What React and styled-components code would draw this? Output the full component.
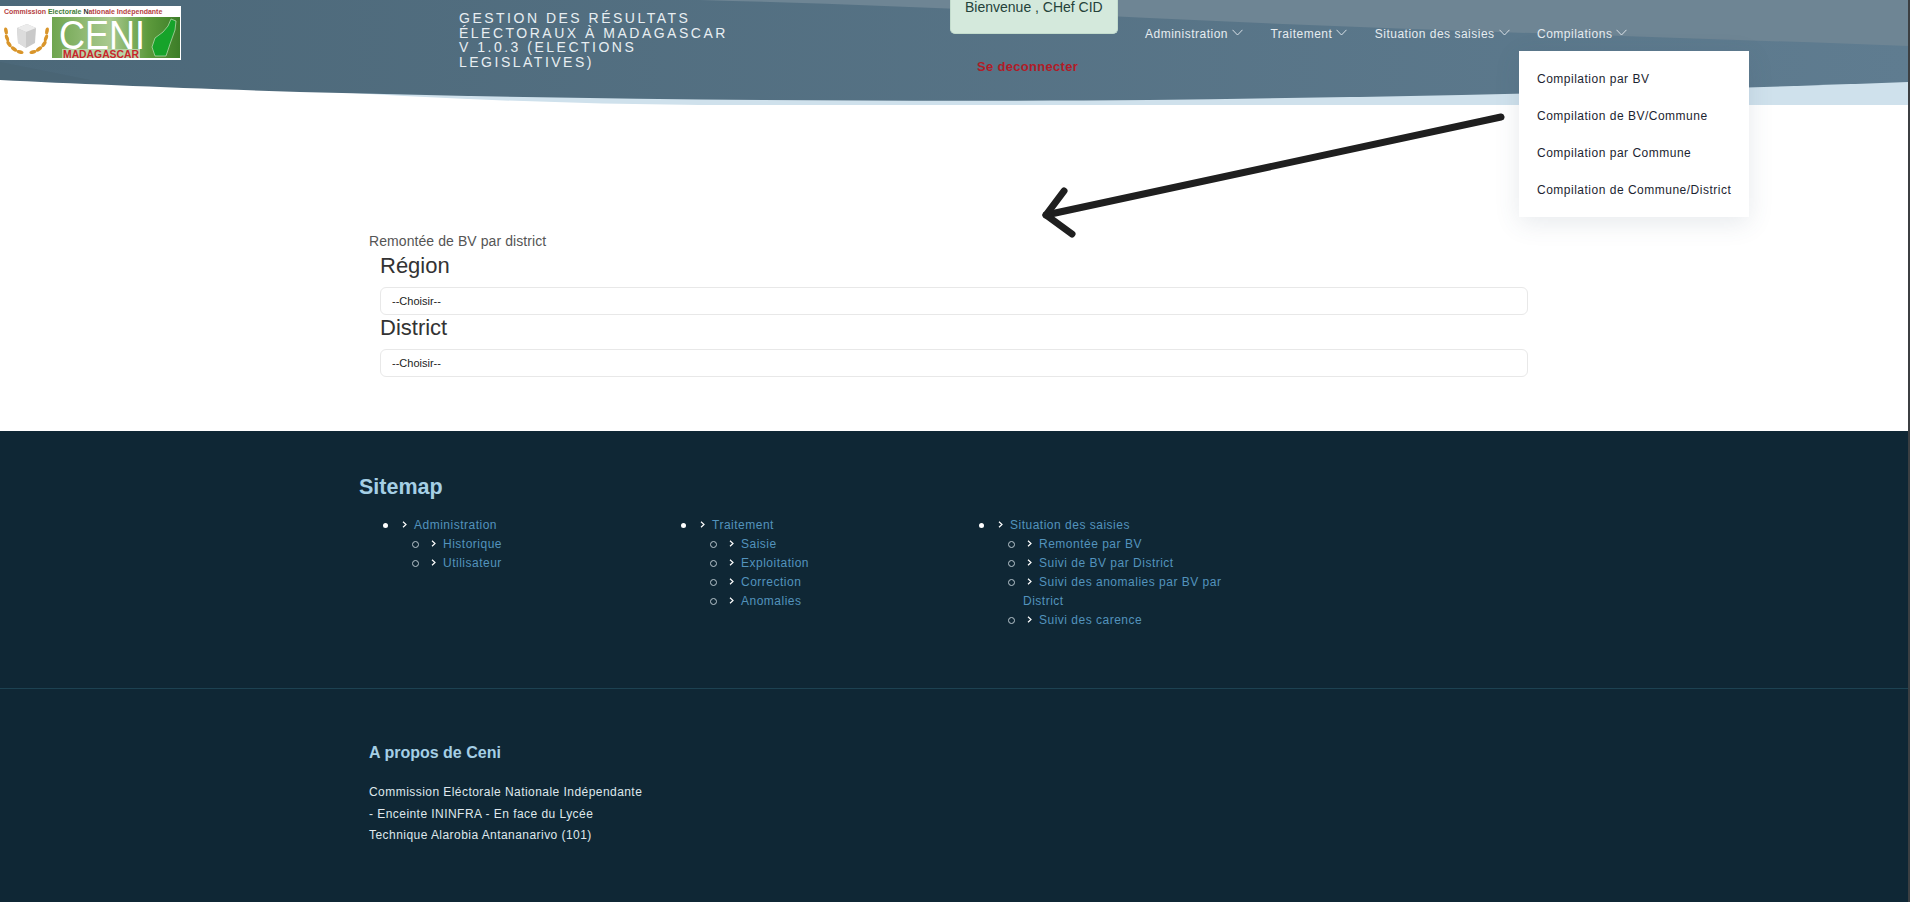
import React from "react";
import styled, { createGlobalStyle } from "styled-components";

const GlobalStyle = createGlobalStyle`
  html, body {
    margin: 0;
    padding: 0;
    background: #fff;
    font-family: "Liberation Sans", Arial, sans-serif;
    font-size: 14px;
    color: #444;
  }
  * { box-sizing: border-box; }
`;

const Page = styled.div`
  position: relative;
  width: 100%;
  height: 902px;
  overflow: hidden;
  border-right: 2px solid #3c3f42;
`;

const Header = styled.header`
  position: relative;
  display: flex;
  align-items: flex-start;
  height: 105px;
`;

const HeaderWave = styled.svg`
  position: absolute;
  inset: 0;
  width: 100%;
  height: 105px;
`;

const LogoBox = styled.div`
  position: relative;
  width: 181px;
  height: 54px;
  margin-top: 6px;
  flex: none;
`;

const Title = styled.h1`
  position: relative;
  width: 278px;
  margin: 11px 0 0 278px;
  flex: none;
  font-size: 14px;
  line-height: 14.6px;
  font-weight: 400;
  letter-spacing: 2.5px;
  color: #e8eef2;
`;

const UserBox = styled.div`
  position: relative;
  width: 195px;
  margin-left: 213px;
  flex: none;
`;

const Welcome = styled.div`
  width: 168px;
  height: 34px;
  padding: 0 0 0 14px;
  background: #d4e9dc;
  border: 1px solid #c3dccd;
  border-top: 0;
  border-radius: 0 0 5px 5px;
  font-size: 14px;
  line-height: 14px;
  color: #24423a;
`;

const Logout = styled.a`
  display: block;
  margin: 25px 0 0 27px;
  font-size: 13px;
  line-height: 16px;
  font-weight: 700;
  letter-spacing: 0.3px;
  color: #b01c27;
`;

const Nav = styled.nav`
  position: relative;
  display: flex;
  height: 51px;
  flex: none;
`;

const NavItem = styled.div`
  position: relative;
  display: flex;
  align-items: center;
  gap: 4px;
  padding: 16px 14px 0 0;
  height: 51px;
  margin-right: 13.4px;
  font-size: 12px;
  line-height: 36px;
  letter-spacing: 0.5px;
  white-space: nowrap;
  color: #e6ecf0;
  align-self: flex-start;
`;

const NavChevron = styled.svg`
  width: 11px;
  height: 7px;
  margin-top: -3px;
  flex: none;
`;

const Dropdown = styled.ul`
  position: absolute;
  top: 51px;
  left: -18px;
  width: 230px;
  margin: 0;
  padding: 9.5px 0 8.5px;
  list-style: none;
  background: #fff;
  box-shadow: 0 6px 24px rgba(60, 80, 110, 0.12);
  z-index: 3;
`;

const DropdownItem = styled.li`
  height: 37px;
  padding-left: 18px;
  font-size: 12px;
  line-height: 37px;
  letter-spacing: 0.5px;
  color: #1c2430;
`;

const Arrow = styled.svg`
  position: absolute;
  left: 1030px;
  top: 105px;
  width: 490px;
  height: 140px;
  z-index: 2;
`;

const Main = styled.main`
  height: 326px;
  padding: 126px 0 0 369px;
`;

const PageTitle = styled.div`
  font-size: 14px;
  line-height: 20px;
  margin-bottom: 2px;
  letter-spacing: 0.08px;
  color: #555;
`;

const Form = styled.form`
  width: 1148px;
  margin-left: 11px;
`;

const FieldLabel = styled.label`
  display: block;
  font-size: 22px;
  line-height: 26px;
  margin-bottom: 8px;
  color: #333;
`;

const Select = styled.select`
  display: block;
  width: 100%;
  height: 28px;
  padding: 0 0 0 11px;
  background: #fff;
  border: 1px solid #e8e8e8;
  border-radius: 6px;
  appearance: none;
  font-family: inherit;
  font-size: 11px;
  color: #222;
`;

const Footer = styled.footer`
  height: 471px;
  background: #0f2735;
`;

const Sitemap = styled.section`
  height: 258px;
  padding: 43px 0 0 359px;
  border-bottom: 1px solid #1d4252;
`;

const SitemapTitle = styled.h2`
  margin: 0 0 16px;
  font-size: 21.5px;
  line-height: 26px;
  font-weight: 700;
  color: #a5cfe5;
`;

const Columns = styled.div`
  display: grid;
  grid-template-columns: repeat(3, 298px);
  margin-left: 10px;
`;

const TopList = styled.ul`
  width: 268px;
  margin: 0;
  padding: 0 0 0 29px;
  list-style: none;
`;

const SubList = styled.ul`
  margin: 0;
  padding: 0 0 0 29px;
  list-style: none;
`;

const Item = styled.li`
  position: relative;
  font-size: 12px;
  line-height: 19px;
  letter-spacing: 0.5px;

  &::before {
    content: "";
    position: absolute;
    top: ${(p) => (p.$sub ? "5.5px" : "7px")};
    left: ${(p) => (p.$sub ? "-15.5px" : "-15.5px")};
    width: 5px;
    height: 5px;
    border-radius: 50%;
    background: ${(p) => (p.$sub ? "transparent" : "#fff")};
    border: ${(p) => (p.$sub ? "1.5px solid #b9c6ce" : "0")};
  }
`;

const ItemLink = styled.a`
  color: #5393bd;
`;

const ItemChevron = styled.svg`
  width: 5px;
  height: 7px;
  margin: 0 7px 3px 4px;
  vertical-align: middle;
`;

const About = styled.section`
  padding: 53px 0 0 369px;
`;

const AboutTitle = styled.h3`
  margin: 0 0 18px;
  font-size: 16px;
  line-height: 22px;
  font-weight: 700;
  color: #a5cfe5;
`;

const AboutText = styled.p`
  width: 300px;
  margin: 0;
  font-size: 12px;
  line-height: 21.6px;
  letter-spacing: 0.45px;
  color: #dfe7ec;
`;

const chevronDown = (
  <NavChevron viewBox="0 0 11 7" fill="none" stroke="#e6ecf0" strokeWidth="0.9">
    <path d="M0.5 0.8 L5.5 6 L10.5 0.8" />
  </NavChevron>
);

const chevronRight = (
  <ItemChevron viewBox="0 0 5 7" fill="none" stroke="#fff" strokeWidth="1.2">
    <path d="M1 0.8 L4 3.5 L1 6.2" />
  </ItemChevron>
);

const navItems = ["Administration", "Traitement", "Situation des saisies"];

const compilations = [
  "Compilation par BV",
  "Compilation de BV/Commune",
  "Compilation par Commune",
  "Compilation de Commune/District",
];

const sitemap = [
  { title: "Administration", items: ["Historique", "Utilisateur"] },
  { title: "Traitement", items: ["Saisie", "Exploitation", "Correction", "Anomalies"] },
  {
    title: "Situation des saisies",
    items: [
      "Remontée par BV",
      "Suivi de BV par District",
      "Suivi des anomalies par BV par District",
      "Suivi des carence",
    ],
  },
];

const leaves = [
  [6, 25, -10], [7, 32, -20], [9, 38, -35], [14, 43, -55], [20, 46, -75],
  [47, 25, 10], [46, 32, 20], [44, 38, 35], [39, 43, 55], [33, 46, 75],
];

const Logo = () => (
  <svg width="181" height="54" viewBox="0 0 181 54">
    <defs>
      <linearGradient id="panel" x1="0" x2="1" y1="0" y2="0">
        <stop offset="0" stopColor="#6fa54f" />
        <stop offset="0.45" stopColor="#a9c98f" />
        <stop offset="0.75" stopColor="#5d9a3c" />
        <stop offset="1" stopColor="#3c7d28" />
      </linearGradient>
    </defs>
    <rect width="181" height="54" fill="#fff" />
    <text x="4" y="8" fontFamily="Liberation Sans" fontSize="7" fontWeight="700" fill="#b5413f">
      Commission <tspan fill="#3f7d37">Electorale</tspan> <tspan fill="#333">N</tspan>ationale <tspan fill="#b5413f">Indépendante</tspan>
    </text>
    <rect x="52" y="11" width="128" height="41" fill="url(#panel)" />
    <path d="M17 22 L27 18 L36 22 L35 37 L26 42 L18 37 Z" fill="#c9c9c9" />
    <path d="M17 22 L26 26 L36 22 L27 18 Z" fill="#ececec" />
    <path d="M26 26 L26 42 L18 37 L17 22 Z" fill="#dcdcdc" />
    <g fill="#d9952a">
      {leaves.map(([x, y, r]) => (
        <ellipse key={x + "-" + y} cx={x} cy={y} rx="1.8" ry="3.6" transform={`rotate(${r} ${x} ${y})`} />
      ))}
    </g>
    <text x="59" y="43" fontFamily="Liberation Sans" fontSize="41" fill="#fff" textLength="86" lengthAdjust="spacingAndGlyphs">CENI</text>
    <rect x="62" y="43" width="78" height="9" fill="#b9d3a8" />
    <text x="63" y="51.5" fontFamily="Liberation Sans" fontSize="10" fontWeight="700" fill="#c9252b" textLength="76" lengthAdjust="spacingAndGlyphs">MADAGASCAR</text>
    <path d="M171 13 L176 15 L175 24 L170 38 L166 50 L155 50 L152 41 L155 32 L163 26 L168 20 Z" fill="#16a32a" stroke="#d9ecd0" strokeWidth="0.6" />
  </svg>
);

export default function App() {
  return (
    <Page>
      <GlobalStyle />
      <Header>
        <HeaderWave viewBox="0 0 1910 105" preserveAspectRatio="none">
          <defs>
            <linearGradient id="wave" x1="0" x2="1" y1="0" y2="0">
              <stop offset="0" stopColor="#4c6879" />
              <stop offset="1" stopColor="#5f7c90" />
            </linearGradient>
          </defs>
          <path d="M300 90 L1910 70 L1910 105 L700 105 C560 104 430 98 300 90 Z" fill="#cfe1ec" />
          <path d="M0 0 L1910 0 L1910 82 C1640 92 1400 97 1150 100 C900 102 600 100 300 92 C180 88 80 84 0 80 Z" fill="url(#wave)" />
          <path d="M700 0 L1910 0 L1910 46 C1640 36 1400 30 1150 18 C1000 10 850 4 700 0 Z" fill="#6e8594" />
          <path d="M0 62 C30 68 60 74 90 80 L0 80 Z" fill="#48626f" opacity="0.5" />
        </HeaderWave>
        <LogoBox>
          <Logo />
        </LogoBox>
        <Title>GESTION DES RÉSULTATS ÉLECTORAUX À MADAGASCAR V 1.0.3 (ELECTIONS LEGISLATIVES)</Title>
        <UserBox>
          <Welcome>Bienvenue , CHef CID</Welcome>
          <Logout>Se deconnecter</Logout>
        </UserBox>
        <Nav>
          {navItems.map((label) => (
            <NavItem key={label}>
              {label}
              {chevronDown}
            </NavItem>
          ))}
          <NavItem>
            Compilations
            {chevronDown}
            <Dropdown>
              {compilations.map((label) => (
                <DropdownItem key={label}>{label}</DropdownItem>
              ))}
            </Dropdown>
          </NavItem>
        </Nav>
      </Header>

      <Arrow viewBox="1030 105 490 140" fill="none" stroke="#1f1f1f" strokeWidth="7" strokeLinecap="round" strokeLinejoin="round">
        <path d="M1501 117 L1046 215" />
        <path d="M1064 191 L1046 215 L1072 234" />
      </Arrow>

      <Main>
        <PageTitle>Remontée de BV par district</PageTitle>
        <Form>
          <FieldLabel>Région</FieldLabel>
          <Select defaultValue="">
            <option value="">--Choisir--</option>
          </Select>
          <FieldLabel>District</FieldLabel>
          <Select defaultValue="">
            <option value="">--Choisir--</option>
          </Select>
        </Form>
      </Main>

      <Footer>
        <Sitemap>
          <SitemapTitle>Sitemap</SitemapTitle>
          <Columns>
            {sitemap.map((group) => (
              <TopList key={group.title}>
                <Item>
                  {chevronRight}
                  <ItemLink>{group.title}</ItemLink>
                  <SubList>
                    {group.items.map((label) => (
                      <Item $sub key={label}>
                        {chevronRight}
                        <ItemLink>{label}</ItemLink>
                      </Item>
                    ))}
                  </SubList>
                </Item>
              </TopList>
            ))}
          </Columns>
        </Sitemap>
        <About>
          <AboutTitle>A propos de Ceni</AboutTitle>
          <AboutText>
            Commission Eléctorale Nationale Indépendante
            <br />- Enceinte ININFRA - En face du Lycée
            <br />Technique Alarobia Antananarivo (101)
          </AboutText>
        </About>
      </Footer>
    </Page>
  );
}
